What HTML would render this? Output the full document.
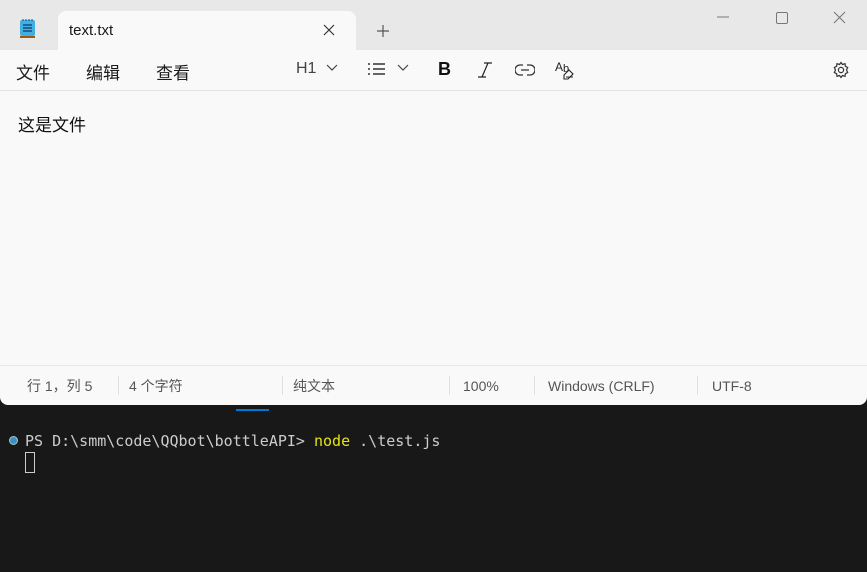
<!DOCTYPE html>
<html><head><meta charset="utf-8"><style>
*{margin:0;padding:0;box-sizing:border-box}
body{width:867px;height:572px;background:#181818;position:relative;overflow:hidden;font-family:"Segoe UI","Liberation Sans","Noto Sans CJK SC",sans-serif;color:#1a1a1a}
.win{position:absolute;left:0;top:0;width:867px;height:405px;background:#f9f9f9;border-radius:0 0 8px 8px;overflow:hidden}
.title{position:absolute;left:0;top:0;width:867px;height:50px;background:#e8e8e8}
.tab{position:absolute;left:58px;top:11px;width:298px;height:40px;background:#f9f9f9;border-radius:8px 8px 0 0}
.abs{position:absolute}
.tb{position:absolute;top:50px;left:0;width:867px;height:41px;border-bottom:1px solid #e5e5e5}
.menu{position:absolute;top:59px;font-size:17px;font-family:"Liberation Sans","Noto Sans CJK SC",sans-serif}
.status{position:absolute;top:365px;left:0;width:867px;height:40px;border-top:1px solid #e8e8e8;font-size:14px;color:#555;font-family:"Liberation Sans","Noto Sans CJK SC",sans-serif}
.status span{position:absolute;top:10px;line-height:20px}
.sep{position:absolute;top:10px;width:1px;height:19px;background:#e0e0e0}
.term{position:absolute;font-family:"DejaVu Sans Mono","Liberation Mono",monospace;font-size:15px;color:#ccc}
</style></head><body>
<div class="win">
 <div class="title"></div>
 <div class="tab"></div>
 <svg class="abs" style="left:18px;top:18px" width="20" height="22" viewBox="0 0 20 22"><rect x="2" y="2" width="15" height="16" rx="2" fill="#3fb0e0"/><rect x="2" y="18" width="15" height="2" fill="#a05a10"/><path d="M5 7h9M5 10h9M5 13h9" stroke="#1a4a80" stroke-width="1.5"/><path d="M5 1v2M8 1v2M11 1v2M14 1v2" stroke="#1a4a80"/></svg>
 <div class="abs" style="left:69px;top:22px;font-size:15px">text.txt</div>
 <svg class="abs" style="left:322px;top:23px" width="14" height="14"><path d="M2 2l10 10M12 2L2 12" stroke="#333" stroke-width="1.2"/></svg>
 <svg class="abs" style="left:376px;top:24px" width="14" height="14"><path d="M7 1v12M1 7h12" stroke="#555" stroke-width="1.2"/></svg>
 <svg class="abs" style="left:716px;top:10px" width="140" height="16"><path d="M1 7h12" stroke="#777"/><rect x="60.5" y="2.5" width="11" height="11" rx="1.5" fill="none" stroke="#777"/><path d="M118 2l11 11M129 2l-11 11" stroke="#777" stroke-width="1.1"/></svg>
 <div class="tb"></div>
 <div class="menu" style="left:16px">文件</div>
 <div class="menu" style="left:86px">编辑</div>
 <div class="menu" style="left:156px">查看</div>
 <div class="abs" style="left:296px;top:60px;font-size:16px;color:#444">H1</div>
 <svg class="abs" style="left:326px;top:64px" width="12" height="8"><path d="M1 1l5 5 5-5" stroke="#444" fill="none" stroke-width="1.2"/></svg>
 <svg class="abs" style="left:367px;top:62px" width="20" height="14"><path d="M1 2h2M1 7h2M1 12h2M6 2h12M6 7h12M6 12h12" stroke="#333" stroke-width="1.4"/></svg>
 <svg class="abs" style="left:397px;top:64px" width="12" height="8"><path d="M1 1l5 5 5-5" stroke="#444" fill="none" stroke-width="1.2"/></svg>
 <div class="abs" style="left:438px;top:59px;font-size:18px;font-weight:bold;color:#111">B</div>
 <svg class="abs" style="left:476px;top:61px" width="18" height="18"><path d="M8 2h8M2 16h8M12 2L6 16" stroke="#222" stroke-width="1.2" fill="none"/></svg>
 <svg class="abs" style="left:515px;top:63px" width="20" height="14"><path d="M8 2H5a5 5 0 0 0 0 10h3M12 2h3a5 5 0 0 1 0 10h-3M6 7h8" stroke="#333" stroke-width="1.3" fill="none"/></svg>
 <svg class="abs" style="left:555px;top:60px" width="20" height="20"><text x="0" y="11" font-size="12" font-family="Liberation Sans" fill="#222">A</text><text x="8" y="12" font-size="11" font-family="Liberation Sans" fill="#222">b</text><path d="M9 15l5-5 4 4-5 5h-4z M11 17h7" stroke="#222" fill="#f9f9f9" stroke-width="1.1"/></svg>
 <svg class="abs" style="left:832px;top:61px" width="18" height="18"><circle cx="9" cy="9" r="2.6" fill="none" stroke="#333" stroke-width="1.2"/><path d="M9 1.5l1.5 2 2.5-.8.4 2.6 2.3 1.2-1.2 2.5 1.2 2.5-2.3 1.2-.4 2.6-2.5-.8L9 16.5l-1.5-2-2.5.8-.4-2.6-2.3-1.2L3.5 9 2.3 6.5l2.3-1.2.4-2.6 2.5.8z" fill="none" stroke="#333" stroke-width="1.2"/></svg>
 <div class="abs" style="left:18px;top:111px;font-size:17px;font-family:'Noto Sans CJK SC',sans-serif;color:#111">这是文件</div>
 <div class="status">
  <span style="left:27px">行 1，列 5</span>
  <div class="sep" style="left:118px"></div><span style="left:129px">4 个字符</span>
  <div class="sep" style="left:282px"></div><span style="left:293px">纯文本</span>
  <div class="sep" style="left:449px"></div><span style="left:463px">100%</span>
  <div class="sep" style="left:534px"></div><span style="left:548px">Windows (CRLF)</span>
  <div class="sep" style="left:697px"></div><span style="left:712px">UTF-8</span>
 </div>
</div>
<div class="abs" style="left:236px;top:409px;width:33px;height:2px;background:#0078d4"></div>
<div class="abs" style="left:9px;top:436px;width:9px;height:9px;border-radius:50%;background:#3b8fc4;border:1px solid #9cc"></div>
<div class="term" style="left:25px;top:432px">PS D:\smm\code\QQbot\bottleAPI&gt; <span style="color:#e5e510">node</span> .\test.js</div>
<div class="abs" style="left:25px;top:452px;width:10px;height:21px;border:1px solid #ccc"></div>
</body></html>
